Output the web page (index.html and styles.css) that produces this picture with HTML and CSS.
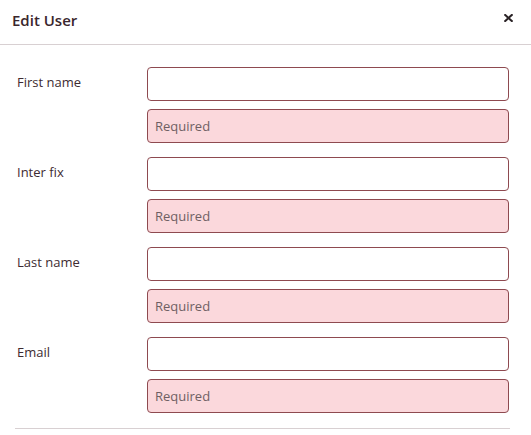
FILE: index.html
```html
<!DOCTYPE html>
<html>
<head>
<meta charset="utf-8">
<link rel="stylesheet" href="styles.css">
</head>
<body>
<div class="modal">
  <div class="header">
    <h1 class="title">Edit User</h1>
    <button class="close" aria-label="Close">
      <svg width="9" height="8" viewBox="0 0 9 8"><path d="M1.2 1 L7.8 7 M7.8 1 L1.2 7" stroke="#2a2326" stroke-width="2.1" stroke-linecap="square"/></svg>
    </button>
  </div>
  <div class="body">
    <div class="row">
      <label class="label">First name</label>
      <div class="fields">
        <div class="input"></div>
        <div class="error">Required</div>
      </div>
    </div>
    <div class="row">
      <label class="label">Inter fix</label>
      <div class="fields">
        <div class="input"></div>
        <div class="error">Required</div>
      </div>
    </div>
    <div class="row">
      <label class="label">Last name</label>
      <div class="fields">
        <div class="input"></div>
        <div class="error">Required</div>
      </div>
    </div>
    <div class="row">
      <label class="label">Email</label>
      <div class="fields">
        <div class="input"></div>
        <div class="error">Required</div>
      </div>
    </div>
  </div>
  <div class="footer-line"></div>
</div>
</body>
</html>
```
FILE: styles.css
```css
html, body {
  margin: 0;
  padding: 0;
  background: #ffffff;
}
body {
  font-family: "Open Sans", "Noto Sans", sans-serif;
  color: #3d2b31;
}
.modal {
  width: 531px;
}
.header {
  height: 44px;
  border-bottom: 1px solid #d8d0d2;
  display: flex;
  align-items: center;
  justify-content: space-between;
  padding: 0 18px 0 12px;
}
.title {
  margin: 0;
  font-size: 15px;
  font-weight: 600;
  color: #3a262d;
  line-height: 20px;
  margin-top: -4px;
}
.close {
  border: 0;
  background: none;
  padding: 0;
  display: flex;
  margin-top: -8px;
}
.body {
  padding: 22px 22px 0 15px;
  display: flex;
  flex-direction: column;
  gap: 14px;
}
.row {
  display: grid;
  grid-template-columns: 132px 1fr;
}
.label {
  font-size: 13px;
  line-height: 18px;
  padding: 6px 0 0 2px;
  color: #3d2b31;
}
.fields {
  display: flex;
  flex-direction: column;
  gap: 8px;
}
.input, .error {
  height: 34px;
  box-sizing: border-box;
  border: 1px solid #8e4a50;
  border-radius: 4px;
  background: #ffffff;
}
.error {
  background: #fbd8dc;
  font-size: 13px;
  line-height: 32px;
  padding-left: 7px;
  color: #6e5f63;
}
.footer-line {
  margin: 15px 21px 0 15px;
  border-top: 1px solid #d8d0d2;
}
```
